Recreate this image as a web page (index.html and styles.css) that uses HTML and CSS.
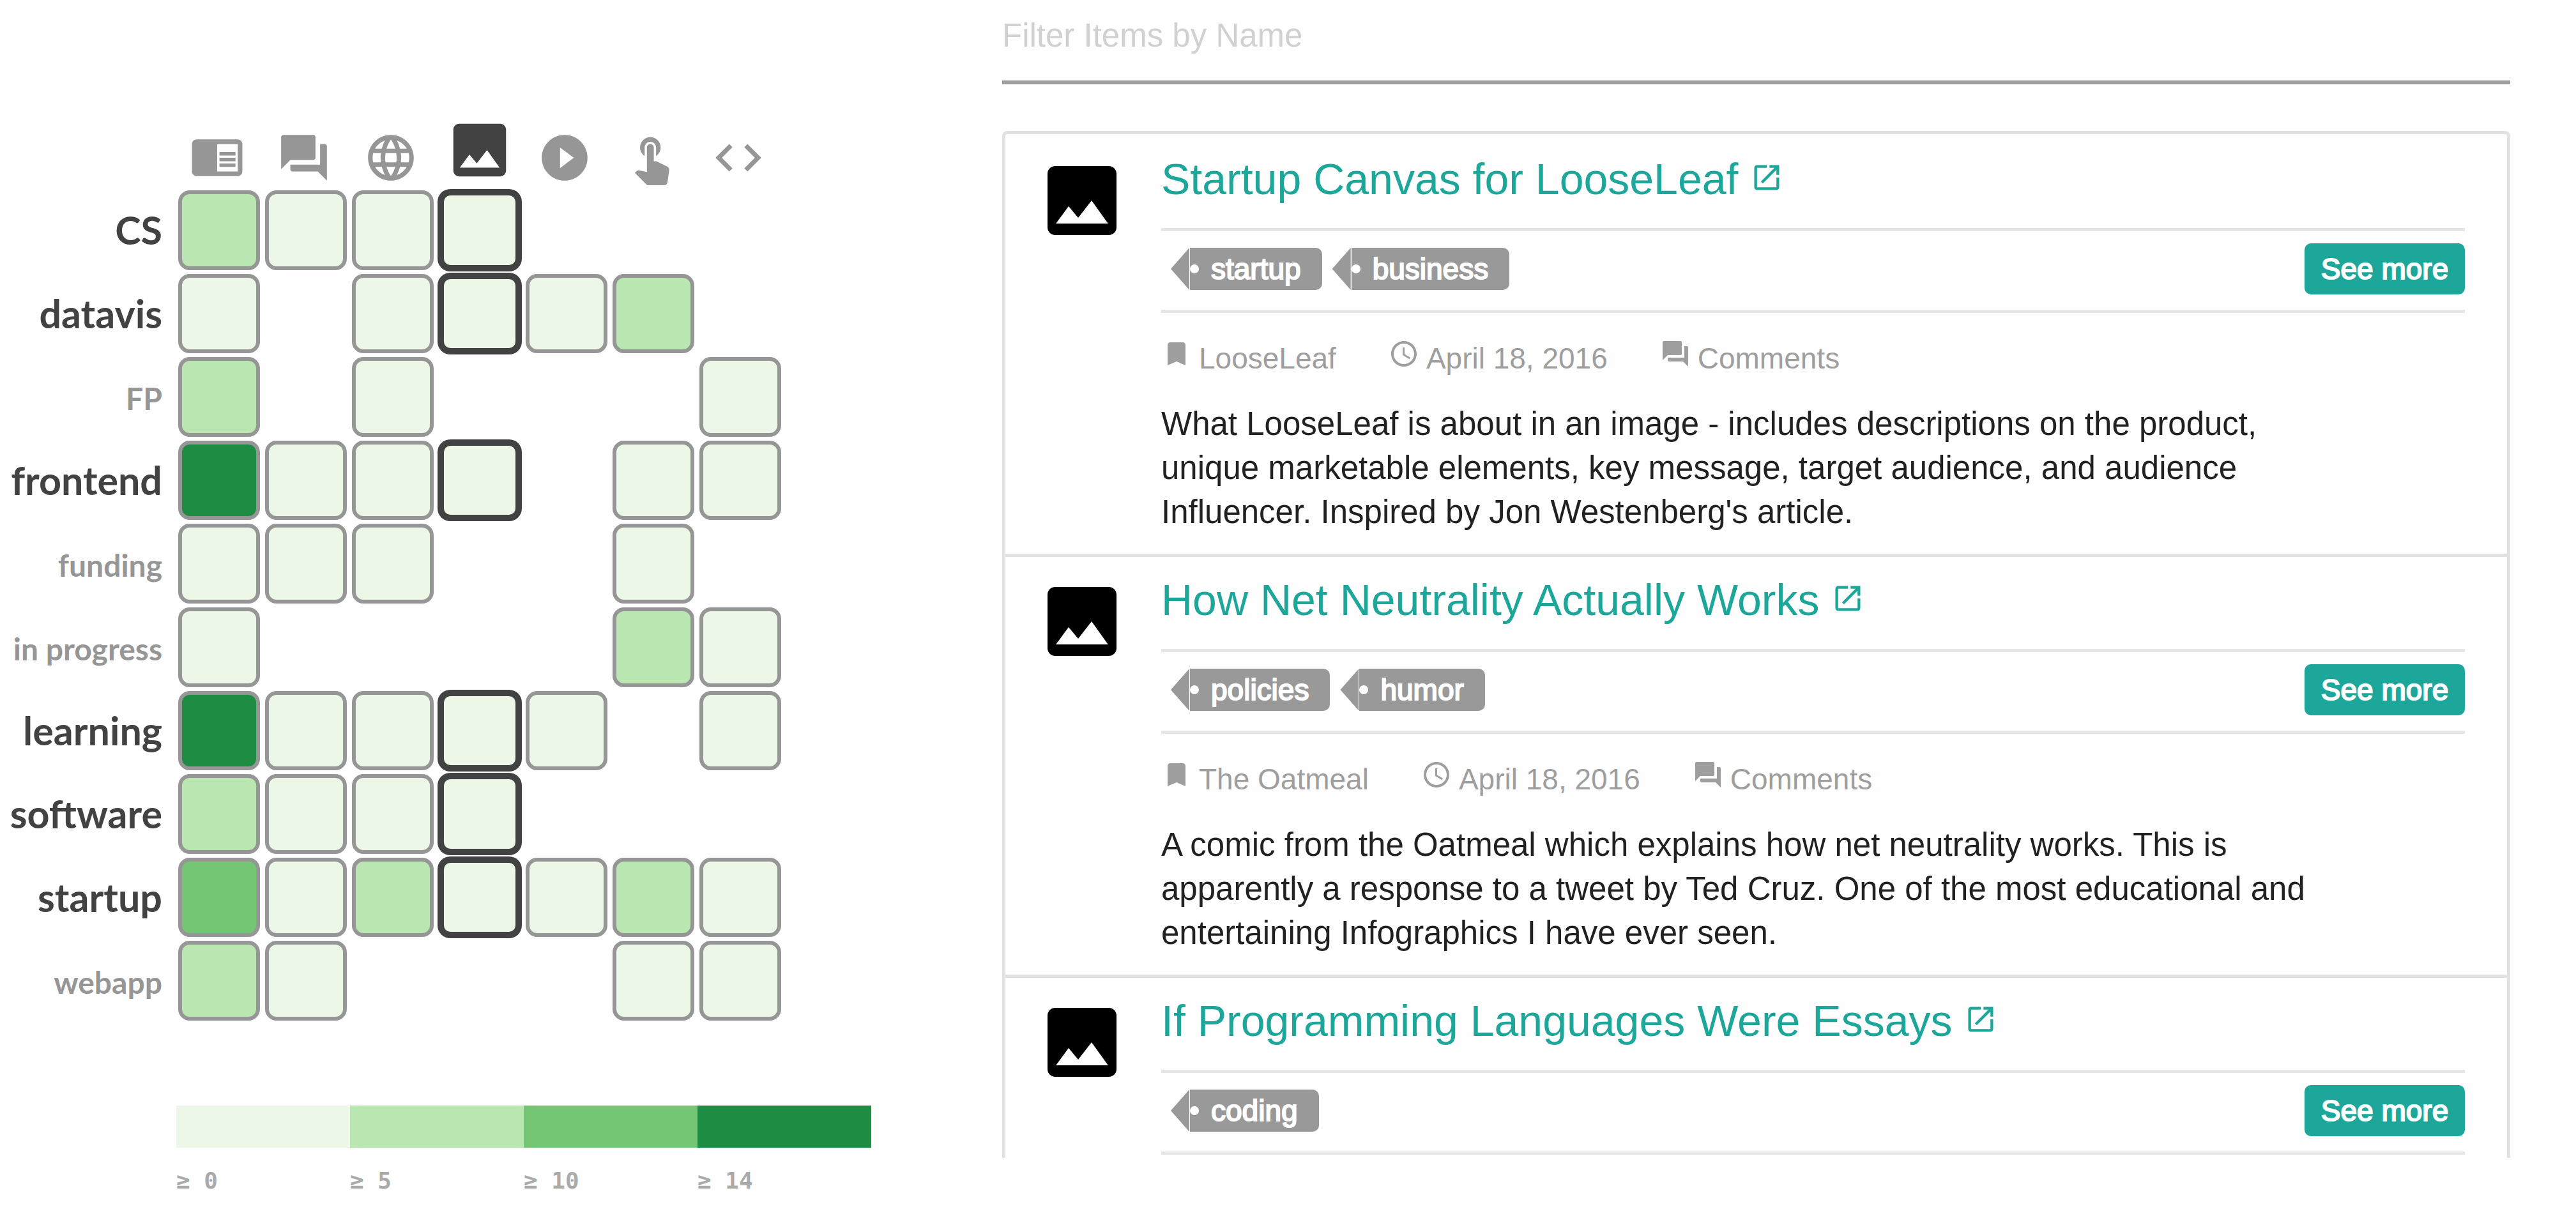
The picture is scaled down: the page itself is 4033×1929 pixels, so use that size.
FILE: index.html
```html
<!DOCTYPE html>
<html lang="en">
<head>
<meta charset="utf-8">
<meta name="viewport" content="width=device-width, initial-scale=1">
<title>LooseLeaf</title>
<link rel="stylesheet" href="styles.css">
</head>
<body>
<svg class="sprite" aria-hidden="true">
  <symbol id="i-reader" viewBox="0 0 24 24"><path d="M13 12h7v1.5h-7zm0-2.5h7V11h-7zm0 5h7V16h-7zM21 4H3c-1.100 0-2 .9-2 2v12c0 1.100.9 2 2 2h18c1.100 0 2-.9 2-2V6c0-1.100-.9-2-2-2zm0 14h-9V6h9v12z"/></symbol>
  <symbol id="i-forum" viewBox="0 0 24 24"><path d="M21 6h-2v9H6v2c0 .55.45 1 1 1h11l4 4V7c0-.55-.45-1-1-1zm-4 6V3c0-.55-.45-1-1-1H3c-.55 0-1 .45-1 1v14l4-4h10c.55 0 1-.45 1-1z"/></symbol>
  <symbol id="i-globe" viewBox="0 0 24 24"><path d="M11.99 2C6.470 2 2 6.480 2 12s4.470 10 9.990 10C17.520 22 22 17.520 22 12S17.520 2 11.990 2zm6.930 6h-2.950c-.32-1.250-.78-2.450-1.380-3.560 1.840.63 3.370 1.910 4.330 3.560zM12 4.040c.83 1.200 1.480 2.530 1.910 3.960h-3.820c.43-1.430 1.080-2.760 1.910-3.960zM4.260 14C4.100 13.360 4 12.690 4 12s.1-1.360.26-2h3.380c-.08.66-.14 1.320-.14 2 0 .68.06 1.340.14 2H4.260zm.82 2h2.950c.32 1.250.78 2.450 1.380 3.560-1.840-.63-3.370-1.900-4.330-3.560zm2.950-8H5.080c.96-1.660 2.490-2.930 4.330-3.560C8.810 5.550 8.350 6.750 8.030 8zM12 19.960c-.83-1.200-1.480-2.530-1.910-3.960h3.820c-.43 1.430-1.080 2.760-1.910 3.960zM14.340 14H9.660c-.09-.66-.16-1.320-.16-2 0-.68.07-1.350.16-2h4.680c.09.65.16 1.320.16 2 0 .68-.07 1.340-.16 2zm.25 5.560c.6-1.110 1.060-2.310 1.380-3.560h2.950c-.96 1.650-2.490 2.930-4.330 3.560zM16.360 14c.08-.66.14-1.320.14-2 0-.68-.06-1.340-.14-2h3.380c.16.64.26 1.310.26 2s-.1 1.360-.26 2h-3.380z"/></symbol>
  <symbol id="i-image" viewBox="0 0 24 24"><path fill-rule="evenodd" d="M5 3h14c1.100 0 2 .9 2 2v14c0 1.100-.9 2-2 2H5c-1.100 0-2-.9-2-2V5c0-1.100.9-2 2-2zm3.500 10.500L5.200 18h13.600l-4.300-6-3.500 4.510z"/></symbol>
  <symbol id="i-play" viewBox="0 0 24 24"><path d="M12 2C6.480 2 2 6.480 2 12s4.480 10 10 10 10-4.480 10-10S17.520 2 12 2zm-2 14.500v-9l6 4.500-6 4.500z"/></symbol>
  <symbol id="i-touch" viewBox="0 0 24 24"><path d="M9 11.240V7.500C9 6.120 10.120 5 11.500 5S14 6.120 14 7.500v3.740c1.210-.81 2-2.180 2-3.740C16 5.010 13.990 3 11.500 3S7 5.010 7 7.500c0 1.560.79 2.930 2 3.740zm9.840 4.630l-4.540-2.260c-.17-.07-.35-.11-.54-.11H13v-6c0-.83-.67-1.500-1.500-1.500S10 6.670 10 7.500v10.740l-3.430-.72c-.08-.01-.15-.03-.24-.03-.31 0-.59.13-.79.33l-.79.8 4.940 4.940c.27.27.65.44 1.060.44h6.790c.75 0 1.330-.55 1.440-1.280l.75-5.270c.01-.07.02-.14.02-.2 0-.62-.38-1.160-.91-1.380z"/></symbol>
  <symbol id="i-code" viewBox="0 0 24 24"><path d="M9.400 16.600L4.800 12l4.600-4.600L8 6l-6 6 6 6 1.400-1.400zm5.200 0l4.600-4.600-4.600-4.600L16 6l6 6-6 6-1.400-1.400z"/></symbol>
  <symbol id="i-open" viewBox="0 0 24 24"><path d="M19 19H5V5h7V3H5c-1.110 0-2 .9-2 2v14c0 1.100.89 2 2 2h14c1.100 0 2-.9 2-2v-7h-2v7zM14 3v2h3.590l-9.830 9.830 1.410 1.410L19 6.410V10h2V3h-7z"/></symbol>
  <symbol id="i-bookmark" viewBox="0 0 24 24"><path d="M17 3H7c-1.100 0-1.990.9-1.990 2L5 21l7-3 7 3V5c0-1.100-.9-2-2-2z"/></symbol>
  <symbol id="i-clock" viewBox="0 0 24 24"><path d="M11.990 2C6.470 2 2 6.480 2 12s4.470 10 9.990 10C17.520 22 22 17.520 22 12S17.520 2 11.990 2zM12 20c-4.420 0-8-3.580-8-8s3.580-8 8-8 8 3.580 8 8-3.580 8-8 8zm.5-13H11v6l5.250 3.150.75-1.230-4.500-2.670z"/></symbol>
</svg>

<main class="page">
  <section class="matrix" aria-label="Topics by type">
    <div class="types">
      <button class="type" aria-label="Article"><svg class="icon"><use href="#i-reader"/></svg></button>
      <button class="type" aria-label="Discussion"><svg class="icon"><use href="#i-forum"/></svg></button>
      <button class="type" aria-label="Website"><svg class="icon"><use href="#i-globe"/></svg></button>
      <button class="type type-on" aria-label="Image"><svg class="icon"><use href="#i-image"/></svg></button>
      <button class="type" aria-label="Video"><svg class="icon"><use href="#i-play"/></svg></button>
      <button class="type" aria-label="Interactive"><svg class="icon"><use href="#i-touch"/></svg></button>
      <button class="type" aria-label="Code"><svg class="icon"><use href="#i-code"/></svg></button>
    </div>

    <div class="cells">
      <span class="topic topic-on">CS</span>
      <button class="cell l5"></button><button class="cell"></button><button class="cell"></button><button class="cell on"></button><i></i><i></i><i></i>

      <span class="topic topic-on">datavis</span>
      <button class="cell"></button><i></i><button class="cell"></button><button class="cell on"></button><button class="cell"></button><button class="cell l5"></button><i></i>

      <span class="topic">FP</span>
      <button class="cell l5"></button><i></i><button class="cell"></button><i></i><i></i><i></i><button class="cell"></button>

      <span class="topic topic-on">frontend</span>
      <button class="cell l14"></button><button class="cell"></button><button class="cell"></button><button class="cell on"></button><i></i><button class="cell"></button><button class="cell"></button>

      <span class="topic">funding</span>
      <button class="cell"></button><button class="cell"></button><button class="cell"></button><i></i><i></i><button class="cell"></button><i></i>

      <span class="topic">in progress</span>
      <button class="cell"></button><i></i><i></i><i></i><i></i><button class="cell l5"></button><button class="cell"></button>

      <span class="topic topic-on">learning</span>
      <button class="cell l14"></button><button class="cell"></button><button class="cell"></button><button class="cell on"></button><button class="cell"></button><i></i><button class="cell"></button>

      <span class="topic topic-on">software</span>
      <button class="cell l5"></button><button class="cell"></button><button class="cell"></button><button class="cell on"></button><i></i><i></i><i></i>

      <span class="topic topic-on">startup</span>
      <button class="cell l10"></button><button class="cell"></button><button class="cell l5"></button><button class="cell on"></button><button class="cell"></button><button class="cell l5"></button><button class="cell"></button>

      <span class="topic">webapp</span>
      <button class="cell l5"></button><button class="cell"></button><i></i><i></i><i></i><button class="cell"></button><button class="cell"></button>
    </div>

    <ul class="legend">
      <li><span class="swatch"></span>≥ 0</li>
      <li><span class="swatch l5"></span>≥ 5</li>
      <li><span class="swatch l10"></span>≥ 10</li>
      <li><span class="swatch l14"></span>≥ 14</li>
    </ul>
  </section>

  <section class="results" aria-label="Items">
    <input class="filter" type="text" placeholder="Filter Items by Name" aria-label="Filter Items by Name">

    <div class="list">
      <article class="item">
        <svg class="thumb" aria-hidden="true"><use href="#i-image"/></svg>
        <div class="body">
          <h2 class="title"><a href="#">Startup Canvas for LooseLeaf <svg class="open" aria-hidden="true"><use href="#i-open"/></svg></a></h2>
          <div class="bar">
            <div class="tags"><a class="tag" href="#">startup</a><a class="tag" href="#">business</a></div>
            <button class="more">See more</button>
          </div>
          <div class="meta">
            <span><svg aria-hidden="true"><use href="#i-bookmark"/></svg>LooseLeaf</span>
            <span><svg aria-hidden="true"><use href="#i-clock"/></svg>April 18, 2016</span>
            <a href="#"><svg aria-hidden="true"><use href="#i-forum"/></svg>Comments</a>
          </div>
          <p class="text">What LooseLeaf is about in an image - includes descriptions on the product, unique marketable elements, key message, target audience, and audience Influencer. Inspired by Jon Westenberg's article.</p>
        </div>
      </article>

      <article class="item">
        <svg class="thumb" aria-hidden="true"><use href="#i-image"/></svg>
        <div class="body">
          <h2 class="title"><a href="#">How Net Neutrality Actually Works <svg class="open" aria-hidden="true"><use href="#i-open"/></svg></a></h2>
          <div class="bar">
            <div class="tags"><a class="tag" href="#">policies</a><a class="tag" href="#">humor</a></div>
            <button class="more">See more</button>
          </div>
          <div class="meta">
            <span><svg aria-hidden="true"><use href="#i-bookmark"/></svg>The Oatmeal</span>
            <span><svg aria-hidden="true"><use href="#i-clock"/></svg>April 18, 2016</span>
            <a href="#"><svg aria-hidden="true"><use href="#i-forum"/></svg>Comments</a>
          </div>
          <p class="text">A comic from the Oatmeal which explains how net neutrality works. This is apparently a response to a tweet by Ted Cruz. One of the most educational and entertaining Infographics I have ever seen.</p>
        </div>
      </article>

      <article class="item">
        <svg class="thumb" aria-hidden="true"><use href="#i-image"/></svg>
        <div class="body">
          <h2 class="title"><a href="#">If Programming Languages Were Essays <svg class="open" aria-hidden="true"><use href="#i-open"/></svg></a></h2>
          <div class="bar">
            <div class="tags"><a class="tag" href="#">coding</a></div>
            <button class="more">See more</button>
          </div>
        </div>
      </article>
    </div>
  </section>
</main>
</body>
</html>
```
FILE: styles.css
```css
* { box-sizing: border-box; }

body {
  margin: 0;
  background: #fefefe;
  color: #212121;
  font-family: "Liberation Sans", Arial, sans-serif;
}

button { margin: 0; padding: 0; border: 0; background: none; font: inherit; cursor: pointer; }
a { color: inherit; text-decoration: none; }
svg { fill: currentColor; flex: none; }
.sprite { position: absolute; width: 0; height: 0; }

.page {
  display: grid;
  grid-template-columns: minmax(0, 1364fr) minmax(0, 2361fr);
  column-gap: 205px;
  padding-right: 103px;
}

/* topic / type matrix */
.matrix { padding-top: 180px; }

.types,
.cells {
  display: grid;
  column-gap: 8px;
  margin-right: 141px;
}

.types {
  grid-template-columns: repeat(7, minmax(0, 1fr));
  align-items: end;
  padding-left: 279px;
  margin-bottom: 8px;
}

.type { display: flex; padding-left: 18px; color: #969696; }
.type .icon { width: 86px; height: 86px; }
.type-on { padding-left: 8px; color: #424242; }
.type-on .icon { width: 112px; height: 110px; }

.cells {
  grid-template-columns: 271px repeat(7, minmax(0, 1fr));
  grid-template-rows: repeat(10, minmax(0, 1fr));
  row-gap: 6px;
  aspect-ratio: 1223 / 1300;
}

.topic {
  align-self: center;
  padding: 5px 17px 0 0;
  color: #969696;
  font: bold 48px/60px Lato, sans-serif;
  text-align: right;
  white-space: nowrap;
}
.topic-on { padding-top: 0; color: #424242; font-size: 61px; }

.cell {
  border: 6px solid #969696;
  border-radius: 18px;
  background: #ecf7e7;
}
.cell.on {
  border-width: 8px;
  border-color: #424242;
  box-shadow: 0 0 0 2px #424242;
}

.legend {
  display: grid;
  grid-template-columns: repeat(4, 1fr);
  margin: 133px 0 0 276px;
  padding: 0;
  list-style: none;
  color: #aaa;
  font: bold 36px/44px "DejaVu Sans Mono", monospace;
}
.swatch { display: block; height: 66px; margin-bottom: 30px; background: #ecf7e7; }

.l5 { background: #b9e6b1; }
.l10 { background: #74c675; }
.l14 { background: #1e8c43; }

/* item list */
.filter {
  display: block;
  width: 100%;
  height: 132px;
  margin-bottom: 73px;
  padding: 0 0 15px;
  border: 0;
  border-bottom: 6px solid #9e9e9e;
  border-radius: 0;
  background: none;
  color: #212121;
  font: 51px "Liberation Sans", Arial, sans-serif;
  outline: 0;
}
.filter::placeholder { color: #d1d1d1; opacity: 1; }

.list {
  border: 5px solid #e2e2e2;
  border-bottom: 0;
  border-radius: 8px 8px 0 0;
}

.item { display: flex; gap: 52px; padding: 27px 66px 31px 48px; }
.item:first-child { padding-top: 30px; }
.item:last-child { padding-bottom: 5px; }
.item + .item { border-top: 5px solid #e2e2e2; }

.thumb { width: 144px; height: 144px; margin-top: 2px; color: #000; }
.body { flex: 1; min-width: 0; }

.title {
  margin: 0 0 37px;
  color: #1ca79a;
  font-size: 68px;
  font-weight: normal;
  line-height: 80px;
}
.open { width: 52px; height: 52px; }

.bar {
  display: flex;
  align-items: center;
  justify-content: space-between;
  padding: 19px 0 24px;
  border: solid #e6e6e6;
  border-width: 5px 0;
}
.tags { display: flex; gap: 46px; padding-left: 45px; }

.tag {
  position: relative;
  padding: 0 33px;
  border-radius: 0 10px 10px 0;
  background: #999;
  color: #fff;
  font-size: 46px;
  line-height: 66px;
  -webkit-text-stroke: 2px #fff;
}
.tag::before {
  content: "";
  position: absolute;
  top: 0;
  left: -30px;
  width: 29px;
  height: 100%;
  background: #999;
  clip-path: polygon(100% 0, 100% 100%, 0 50%);
}
.tag::after {
  content: "";
  position: absolute;
  top: 26px;
  left: 0;
  width: 14px;
  height: 14px;
  border-radius: 7px;
  background: #fff;
}

.more {
  width: 251px;
  height: 80px;
  border-radius: 10px;
  background: #1ca79a;
  color: #fff;
  font-size: 46px;
  -webkit-text-stroke: 2px #fff;
}

.meta {
  display: flex;
  gap: 82px;
  padding-top: 40px;
  color: #9e9e9e;
  font-size: 46px;
  line-height: 62px;
}
.meta > * { display: flex; gap: 11px; }
.meta svg { width: 48px; height: 48px; }

.text {
  margin: 37px 0 0;
  padding-right: 200px;
  font-size: 51px;
  line-height: 69px;
}
```
